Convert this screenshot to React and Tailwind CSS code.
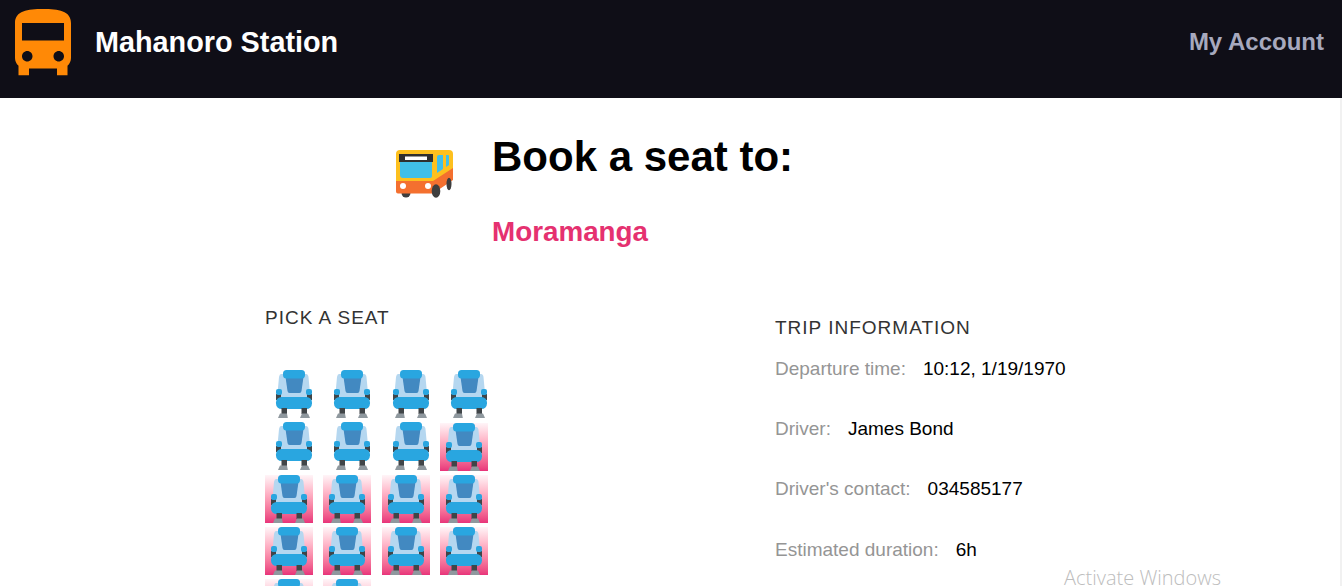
const font = { fontFamily: '"Liberation Sans", Arial, sans-serif' };

function BusLogo() {
  return (
    <svg width="84" height="84" viewBox="0 0 24 24" className="ml-px mt-[4px] shrink-0" fill="#ff8906">
      <path d="M4 16c0 .88.39 1.67 1 2.22V20.9h3V19h8v1.9h3v-2.68c.61-.55 1-1.34 1-2.22V6c0-3.5-3.58-4-8-4s-8 .5-8 4v10zm3.5 1c-.83 0-1.5-.67-1.5-1.5S6.67 14 7.5 14s1.5.67 1.5 1.5S8.33 17 7.5 17zm9 0c-.83 0-1.5-.67-1.5-1.5s.67-1.5 1.5-1.5 1.5.67 1.5 1.5-.67 1.5-1.5 1.5zm1.5-6H6V6h12v5z" />
    </svg>
  );
}

function BusEmoji() {
  return (
    <svg width="58" height="52" viewBox="0 0 58 52" className="shrink-0">
      <ellipse cx="10" cy="45" rx="4.5" ry="4.5" fill="#3e3e3e" />
      <path d="M4 2h49q4 0 4 4v16L37 34H0V6q0-4 4-4z" fill="#fdc01e" />
      <path d="M0 33h37l20-13v12L37 45.5H2q-2 0-2-2z" fill="#f4702f" />
      <rect x="3" y="6" width="34" height="8" fill="#2f2f2f" />
      <rect x="9" y="8.5" width="22" height="3.5" fill="#fff" />
      <path d="M4 14h32v14q0 2-2 2H7q-3 0-3-3z" fill="#40bfe8" />
      <path d="M41 9q0-2 2-2h4v14l-6 4z" fill="#40bfe8" />
      <path d="M50 7h2q1 0 1 1v9l-3 2z" fill="#40bfe8" />
      <circle cx="7" cy="38" r="3" fill="#fff" />
      <circle cx="32" cy="38" r="3" fill="#fff" />
      <ellipse cx="40" cy="43" rx="4.3" ry="6.7" fill="#3e3e3e" />
      <ellipse cx="53" cy="36" rx="2.5" ry="6.2" fill="#3e3e3e" />
    </svg>
  );
}

function Seat({ booked }) {
  return (
    <div className={booked ? "h-12 w-12 bg-linear-to-b from-[#fff5f8] to-[#e8337a]" : "h-12 w-12"}>
      <svg width="48" height="48" viewBox="0 0 48 48" className={booked ? "block" : "block ml-[5px] -mt-px"}>
        <path d="M11 4h25q2 0 2.5 3l2 22H7l2-22q.5-3 2-3z" fill="#b5d7f0" />
        <path d="M15.5 7h18l-2 14q-.3 2-2 2h-10q-1.7 0-2-2z" fill="#4289c1" />
        <rect x="13" y="0" width="22" height="8.5" rx="3.5" fill="#29a6e0" />
        <rect x="6" y="24" width="5" height="6" fill="#404548" />
        <rect x="37" y="24" width="5" height="6" fill="#404548" />
        <rect x="6" y="19" width="6" height="6" rx="2" fill="#29a6e0" />
        <rect x="36" y="19" width="6" height="6" rx="2" fill="#29a6e0" />
        <rect x="6" y="27" width="36" height="12" rx="5.5" fill="#29a6e0" />
        <rect x="11.5" y="38" width="5.5" height="6" fill="#404548" />
        <rect x="31.5" y="38" width="5.5" height="6" fill="#404548" />
        <path d="M10 43.5h7l.8 4.5H8z" fill="#8f989e" />
        <path d="M32 43.5h6l2 4.5H30z" fill="#8f989e" />
      </svg>
    </div>
  );
}

const seats = [0, 0, 0, 0, 0, 0, 0, 1, 1, 1, 1, 1, 1, 1, 1, 1, 1, 1];
const info = [
  ["Departure time:", "10:12, 1/19/1970"],
  ["Driver:", "James Bond"],
  ["Driver's contact:", "034585177"],
  ["Estimated duration:", "6h"],
];

export default function App() {
  return (
    <div style={font} className="relative h-[586px] overflow-hidden bg-white">
      <header className="flex h-[98px] items-center justify-between bg-[#0f0e17] pr-[18px] pb-[14px]">
        <div className="flex items-center gap-[10px]">
          <BusLogo />
          <span className="mt-[2px] text-[28.8px] font-bold text-white">Mahanoro Station</span>
        </div>
        <span className="text-2xl font-bold text-[#a7a9be]">My Account</span>
      </header>
      <main className="h-[488px] border-r-2 border-[#f1f1f1]">
        <section className="ml-[396px] flex gap-[38px] pt-[31px]">
          <div className="pt-[19px]"><BusEmoji /></div>
          <div>
            <h1 className="text-[42px] leading-[56px] font-bold text-black">Book a seat to:</h1>
            <h2 className="mt-[27px] text-[27.8px] leading-[40px] font-bold text-[#e53170]">Moramanga</h2>
          </div>
        </section>
        <section className="ml-[265px] mt-[54px] flex">
          <div className="w-[510px]">
            <h3 className="text-[19px] leading-[24px] tracking-[1px] text-[#333]">PICK A SEAT</h3>
            <div className="mt-[41px] grid w-[224px] grid-cols-[48px_48px_48px_48px] gap-x-[10.3px] gap-y-[4px]">
              {seats.map((b, i) => <Seat key={i} booked={!!b} />)}
            </div>
          </div>
          <div className="pt-[10px]">
            <h3 className="text-[19px] leading-[24px] tracking-[1px] text-[#333]">TRIP INFORMATION</h3>
            <div className="mt-[18px] flex flex-col gap-[39.2px]">
              {info.map(([k, v]) => (
                <div key={k} className="flex gap-[17px] text-[19px] leading-[21px]">
                  <span className="text-[#959595]">{k}</span>
                  <span className="text-black">{v}</span>
                </div>
              ))}
            </div>
          </div>
        </section>
      </main>
      <div style={{ fontFamily: '"Open Sans", sans-serif' }} className="absolute left-[1064px] top-[567px] text-[20px] leading-[19px] pt-px font-light text-[#bdbdbd]">Activate Windows</div>
    </div>
  );
}
